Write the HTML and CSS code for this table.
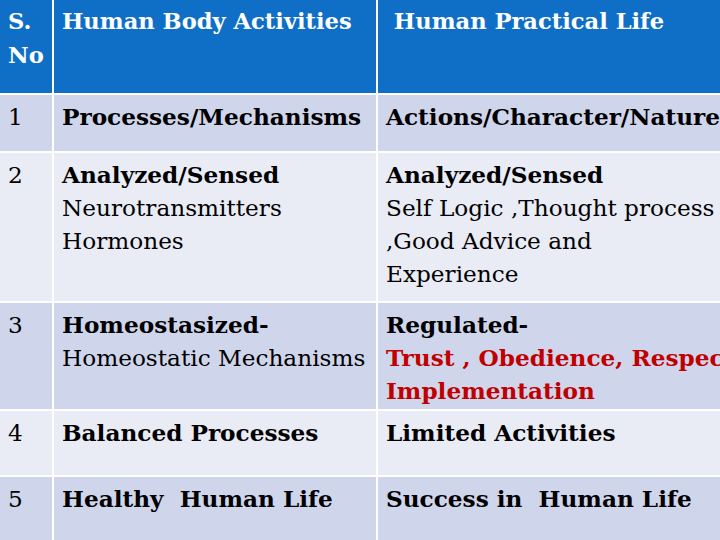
FILE: index.html
```html
<!DOCTYPE html>
<html>
<head>
<meta charset="utf-8">
<link rel="stylesheet" href="styles.css">
</head>
<body>
<div class="table">
  <div class="cell head">S.<br>No</div>
  <div class="cell head">Human Body Activities</div>
  <div class="cell head">&nbsp;Human Practical Life</div>

  <div class="cell band"><span class="num">1</span></div>
  <div class="cell band"><b>Processes/Mechanisms</b></div>
  <div class="cell band"><b>Actions/Character/Nature</b></div>

  <div class="cell light"><span class="num">2</span></div>
  <div class="cell light"><b>Analyzed/Sensed</b><br>Neurotransmitters<br>Hormones</div>
  <div class="cell light"><b>Analyzed/Sensed</b><br>Self Logic ,Thought process ,<br>,Good Advice and<br>Experience</div>

  <div class="cell band"><span class="num">3</span></div>
  <div class="cell band"><b>Homeostasized-</b><br>Homeostatic Mechanisms</div>
  <div class="cell band"><b>Regulated-</b><br><b class="red">Trust , Obedience, Respect</b><br><b class="red">Implementation</b></div>

  <div class="cell light"><span class="num">4</span></div>
  <div class="cell light"><b>Balanced Processes</b></div>
  <div class="cell light"><b>Limited Activities</b></div>

  <div class="cell band"><span class="num">5</span></div>
  <div class="cell band"><b>Healthy&nbsp; Human Life</b></div>
  <div class="cell band"><b>Success in&nbsp; Human Life</b></div>
</div>
</body>
</html>
```
FILE: styles.css
```css
html, body {
  margin: 0;
  padding: 0;
  background: #ffffff;
  overflow: hidden;
  width: 720px;
  height: 540px;
}

.table {
  display: grid;
  grid-template-columns: 52px 322px 420px;
  grid-template-rows: 93px 56px 148px 106px 64px 80px;
  gap: 2px;
  width: 800px;
  background: #ffffff;
  font-family: "DejaVu Serif", "Liberation Serif", serif;
  font-size: 23.2px;
  line-height: 33px;
  color: #000000;
}

.cell {
  padding: 5px 0 0 8px;
  white-space: nowrap;
  overflow: hidden;
}

.head {
  background: #0f6fc6;
  color: #ffffff;
  font-weight: bold;
  font-size: 22.6px;
  padding-top: 4px;
  line-height: 34px;
}

.band {
  background: #cfd5ea;
}

.light {
  background: #e9ebf5;
}

.red {
  color: #c00000;
}
```
